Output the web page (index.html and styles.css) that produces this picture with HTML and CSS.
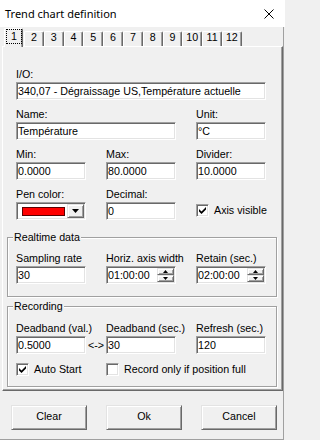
FILE: index.html
```html
<!DOCTYPE html>
<html>
<head>
<meta charset="utf-8">
<title>Trend chart definition</title>
<link rel="stylesheet" href="styles.css">
</head>
<body>
<div class="window">
  <div class="titlebar">
    <span class="title">Trend chart definition</span>
    <svg class="close" width="10" height="10" viewBox="0 0 10 10"><path d="M0.5 0.5L9.5 9.5M9.5 0.5L0.5 9.5" stroke="#000" stroke-width="1" fill="none"/></svg>
  </div>
  <div class="client">
    <div class="tabs">
      <div class="tab selected"><span class="focus">1</span></div>
      <div class="tab">2</div>
      <div class="tab">3</div>
      <div class="tab">4</div>
      <div class="tab">5</div>
      <div class="tab">6</div>
      <div class="tab">7</div>
      <div class="tab">8</div>
      <div class="tab">9</div>
      <div class="tab">10</div>
      <div class="tab">11</div>
      <div class="tab">12</div>
    </div>
    <div class="page">
      <div class="grid top-grid">
        <div class="field span3"><div class="label">I/O:</div><div class="edit">340,07 - Dégraissage US,Température actuelle</div></div>
        <div class="field span2"><div class="label">Name:</div><div class="edit">Température</div></div>
        <div class="field"><div class="label">Unit:</div><div class="edit">°C</div></div>
        <div class="field"><div class="label">Min:</div><div class="edit">0.0000</div></div>
        <div class="field"><div class="label">Max:</div><div class="edit">80.0000</div></div>
        <div class="field"><div class="label">Divider:</div><div class="edit">10.0000</div></div>
        <div class="field"><div class="label">Pen color:</div>
          <div class="edit combo"><span class="swatch"></span><span class="raised dd"><svg width="7" height="4" viewBox="0 0 7 4"><path d="M0 0H7L3.5 4Z" fill="#000"/></svg></span></div>
        </div>
        <div class="field"><div class="label">Decimal:</div><div class="edit">0</div></div>
        <div class="field"><div class="label"></div>
          <div class="check axis"><span class="cbox"><svg width="7" height="7" viewBox="0 0 7 7"><path d="M0 2L2.5 4.5L7 0V2.5L2.5 7L0 4.5Z" fill="#000"/></svg></span><span>Axis visible</span></div>
        </div>
      </div>
      <fieldset class="group realtime">
        <legend>Realtime data</legend>
        <div class="grid">
          <div class="field"><div class="label">Sampling rate</div><div class="edit">30</div></div>
          <div class="field"><div class="label">Horiz. axis width</div>
            <div class="edit spinedit"><span class="val">01:00:00</span><span class="spin"><span class="raised sbtn"><svg width="5" height="3" viewBox="0 0 5 3"><path d="M2.5 0L5 3H0Z" fill="#000"/></svg></span><span class="raised sbtn"><svg width="5" height="3" viewBox="0 0 5 3"><path d="M0 0H5L2.5 3Z" fill="#000"/></svg></span></span></div>
          </div>
          <div class="field"><div class="label">Retain (sec.)</div>
            <div class="edit spinedit"><span class="val">02:00:00</span><span class="spin"><span class="raised sbtn"><svg width="5" height="3" viewBox="0 0 5 3"><path d="M2.5 0L5 3H0Z" fill="#000"/></svg></span><span class="raised sbtn"><svg width="5" height="3" viewBox="0 0 5 3"><path d="M0 0H5L2.5 3Z" fill="#000"/></svg></span></span></div>
          </div>
        </div>
      </fieldset>
      <fieldset class="group recording">
        <legend>Recording</legend>
        <div class="grid5">
          <div class="label">Deadband (val.)</div>
          <div></div>
          <div class="label">Deadband (sec.)</div>
          <div></div>
          <div class="label">Refresh (sec.)</div>
          <div class="edit">0.5000</div>
          <div class="arrow">&lt;-&gt;</div>
          <div class="edit">30</div>
          <div></div>
          <div class="edit">120</div>
        </div>
        <div class="checks">
          <div class="check first"><span class="cbox"><svg width="7" height="7" viewBox="0 0 7 7"><path d="M0 2L2.5 4.5L7 0V2.5L2.5 7L0 4.5Z" fill="#000"/></svg></span><span>Auto Start</span></div>
          <div class="check"><span class="cbox"></span><span>Record only if position full</span></div>
        </div>
      </fieldset>
    </div>
    <div class="buttons">
      <div class="btn">Clear</div>
      <div class="btn">Ok</div>
      <div class="btn">Cancel</div>
    </div>
  </div>
</div>
</body>
</html>
```
FILE: styles.css
```css
html, body {
  margin: 0;
  padding: 0;
}
html {
  background: #f0f0f0;
}
body {
  width: 285px;
  height: 440px;
  overflow: hidden;
  font-family: "Liberation Sans", Arial, sans-serif;
  font-size: 10.7px;
  color: #000;
}
.window {
  width: 285px;
  height: 440px;
  display: flex;
  flex-direction: column;
}
.titlebar {
  flex: none;
  height: 27px;
  box-sizing: border-box;
  background: #fff;
  display: flex;
  align-items: center;
  justify-content: space-between;
  padding: 0 11px 0 5px;
}
.title {
  font-family: "Noto Sans", sans-serif;
  font-size: 11px;
}
.close {
  display: block;
}
.client {
  flex: 1;
  width: 284px;
  box-sizing: border-box;
  border-right: 1px solid #a0a0a0;
  border-bottom: 1px solid #a0a0a0;
  display: flex;
  flex-direction: column;
}

/* tabs */
.tabs {
  flex: none;
  height: 19px;
  display: flex;
  align-items: flex-end;
  padding-left: 4px;
}
.tab {
  width: 19.8px;
  height: 15px;
  box-sizing: border-box;
  border-top: 1px solid #fff;
  border-left: 1px solid #fff;
  border-right: 1px solid #696969;
  box-shadow: inset -1px 0 #a0a0a0;
  border-radius: 2px 2px 0 0;
  text-align: center;
  line-height: 10px;
}
.tab.selected {
  width: 19px;
  height: 19px;
  margin-right: 1px;
  margin-bottom: -1px;
  padding-left: 1px;
  position: relative;
  z-index: 1;
  background: #f0f0f0;
  display: flex;
  align-items: flex-start;
}
.focus {
  width: 16px;
  height: 15px;
  box-sizing: border-box;
  border: 1px dotted #000;
  line-height: 13px;
  text-align: center;
}

/* page */
.page {
  flex: none;
  margin-left: 2px;
  width: 281px;
  box-sizing: border-box;
  border: 1px solid;
  border-color: #fff #696969 #696969 #fff;
  box-shadow: inset -1px -1px #a0a0a0;
  padding: 21px 0 3px 4px;
}
.grid {
  display: grid;
  grid-template-columns: 70px 70px 70px;
  column-gap: 20px;
  row-gap: 8px;
}
.top-grid {
  margin-left: 9px;
}
.span3 {
  grid-column: span 3;
}
.span2 {
  grid-column: span 2;
}
.field {
  display: flex;
  flex-direction: column;
}
.label {
  height: 13px;
  line-height: 13px;
  margin-bottom: 1px;
  white-space: nowrap;
}
.edit {
  height: 18px;
  box-sizing: border-box;
  border: 1px solid;
  border-color: #a0a0a0 #fff #fff #a0a0a0;
  box-shadow: inset 1px 1px #696969, inset -1px -1px #e3e3e3;
  background: #fff;
  line-height: 16px;
  padding-left: 1px;
  white-space: nowrap;
  overflow: hidden;
}

/* combo */
.combo {
  display: flex;
  align-items: center;
  padding: 1px;
}
.swatch {
  width: 43px;
  height: 9px;
  box-sizing: border-box;
  border: 1px solid #5a0000;
  background: #f00;
  margin-left: 4px;
}
.raised {
  box-sizing: border-box;
  border: 1px solid;
  border-color: #e3e3e3 #696969 #696969 #e3e3e3;
  box-shadow: inset 1px 1px #fff, inset -1px -1px #a0a0a0;
  background: #f0f0f0;
  display: flex;
  align-items: center;
  justify-content: center;
}
.raised svg {
  display: block;
}
.dd {
  margin-left: auto;
  width: 17px;
  height: 14px;
}

/* spin */
.spinedit {
  display: flex;
  padding: 1px;
  line-height: 14px;
}
.val {
  flex: 1;
}
.spin {
  width: 17px;
  display: flex;
  flex-direction: column;
}
.sbtn {
  flex: 1;
}

/* checkboxes */
.check {
  display: flex;
  align-items: center;
  gap: 5px;
  white-space: nowrap;
  line-height: 13px;
}
.axis {
  margin-top: 2px;
}
.cbox {
  flex: none;
  width: 13px;
  height: 13px;
  box-sizing: border-box;
  border: 1px solid;
  border-color: #a0a0a0 #fff #fff #a0a0a0;
  box-shadow: inset 1px 1px #696969, inset -1px -1px #e3e3e3;
  background: #fff;
  display: flex;
  align-items: center;
  justify-content: center;
}
.cbox svg {
  display: block;
}

/* group boxes */
.group {
  margin: 11px 0 0 0;
  min-width: 0;
  width: 270px;
  box-sizing: border-box;
  border: 1px solid #a0a0a0;
  box-shadow: inset 1px 1px #fff, 1px 1px #fff;
  padding: 8px 0 12px 5px;
}
.group > .grid,
.group > .grid5,
.group > .checks {
  margin-left: 3px;
}
.group legend {
  padding: 0 1px;
  line-height: 13px;
  background: #f0f0f0;
}
.recording {
  margin-top: 3px;
  padding-bottom: 10px;
}
.grid5 {
  display: grid;
  grid-template-columns: 70px 20px 70px 20px 70px;
  margin-top: 1px;
}
.arrow {
  display: flex;
  align-items: center;
  justify-content: center;
  white-space: nowrap;
}
.checks {
  display: flex;
  margin-top: 9px;
}
.check.first {
  width: 90px;
}

/* buttons */
.buttons {
  flex: none;
  display: flex;
  gap: 19px;
  padding-left: 11px;
  margin-top: 14px;
}
.btn {
  width: 76px;
  height: 25px;
  box-sizing: border-box;
  border: 1px solid;
  border-color: #e3e3e3 #696969 #696969 #e3e3e3;
  box-shadow: inset 1px 1px #fff, inset -1px -1px #a0a0a0;
  display: flex;
  align-items: center;
  justify-content: center;
  line-height: 13px;
  padding-bottom: 2px;
}
```
